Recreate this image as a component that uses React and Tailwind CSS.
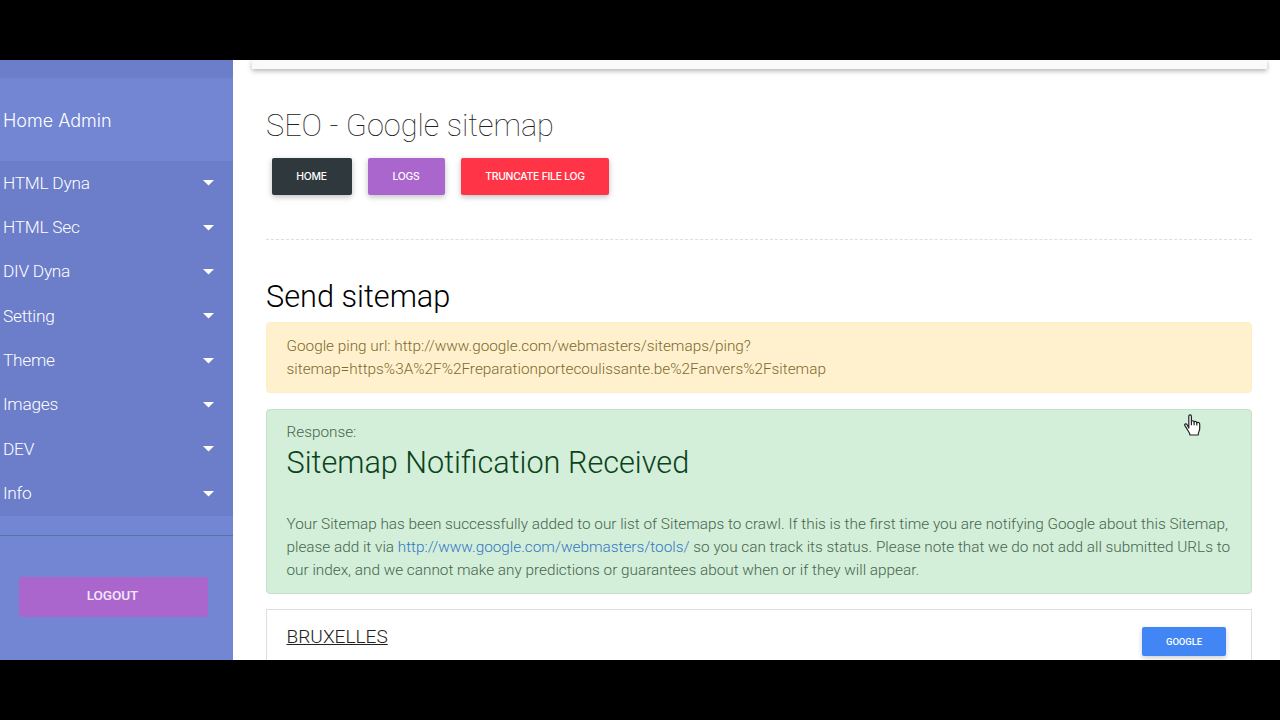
import React from 'react'

const menu = ['HTML Dyna', 'HTML Sec', 'DIV Dyna', 'Setting', 'Theme', 'Images', 'DEV', 'Info']

function Sidebar(){
  return (
    <aside className="flex w-[233px] shrink-0 flex-col bg-[#7286d3] text-white">
      <div className="h-[18px] shrink-0 bg-[#6c7dc9]" />
      <div className="flex h-[83px] shrink-0 items-center pl-[3px] pt-px font-['Inter'] text-[18px] font-light">Home Admin</div>
      <nav className="flex h-[355px] shrink-0 flex-col bg-[#6c7dc9]">
        {menu.map(name => (
          <a key={name} href="#" className="flex flex-1 items-center justify-between pl-[3px] pr-[19px] text-[17.3px] font-light">
            <span className="pt-[0.6px] tracking-[-0.25px]">{name}</span>
            <svg width="11" height="6" viewBox="0 0 11 6" fill="currentColor"><path d="M0 0h11L5.5 5.5z" /></svg>
          </a>
        ))}
      </nav>
      <div className="mt-[19px] h-px shrink-0 bg-[#4f7a9c]" />
      <button className="mx-[19px] mt-[41px] h-[40px] w-[189px] rounded-[3px] bg-[#aa66cc] pb-[3px] pr-[2px] text-[13.6px] font-medium tracking-[-0.1px] text-white/85">LOGOUT</button>
    </aside>
  )
}

function Button({className, children}){
  return (
    <button className={`h-[37px] rounded-[2px] font-['Inter'] text-[10.4px] font-medium tracking-[-0.25px] text-white shadow-[0_2px_5px_rgba(0,0,0,0.16),0_2px_8px_rgba(0,0,0,0.1)] ${className}`}>{children}</button>
  )
}

// hand pointer resting over the response panel
function Pointer(){
  return (
    <svg className="absolute left-[1184px] top-[414px]" width="17" height="22" viewBox="0 0 17 22" fill="white" stroke="#222" strokeWidth="1.2" strokeLinejoin="round">
      <path d="M4.8 14V2.2c0-1.8 2.6-1.8 2.6 0v5.3c.3-1.1 2.5-1 2.7.5.5-.9 2.5-.7 2.7.8 1-.9 2.9-.3 2.9 1.4v4.2c0 2.5-1.5 3.6-1.5 6.6H6c0-2.3-1.7-3.6-2.7-5.6L.9 11.6c-.7-1.3.8-2.3 1.9-1.3z" />
      <path d="M7.4 7.5v3.7M10.1 8v3.3M12.8 8.8v2.7" fill="none" />
    </svg>
  )
}

export default function App(){
  return (
    <div className="relative h-[720px] w-[1280px] overflow-hidden bg-black py-[60px] font-['Roboto',sans-serif] font-light">
      <div className="flex h-[600px] overflow-hidden bg-white">
        <Sidebar />
        <main className="flex min-w-0 flex-1 flex-col">
          <div className="ml-[19px] mr-[13px] h-[9px] shrink-0 bg-[#fafafb] shadow-[0_2px_5px_rgba(0,0,0,0.3)]" />
          <div className="flex flex-col pl-[33px] pr-[28px]">
            <h1 className="mt-[38px] h-[38px] whitespace-nowrap text-[30.7px] font-thin leading-[38px] text-[#222]">SEO - Google sitemap</h1>
            <div className="mt-[13px] flex gap-4 pl-[6px]">
              <Button className="w-[80px] bg-[#2e383d] pr-px">HOME</Button>
              <Button className="w-[77px] bg-[#aa66cc] pr-px">LOGS</Button>
              <Button className="w-[148px] bg-[#ff3547]">TRUNCATE FILE LOG</Button>
            </div>
            <div className="mt-[44px] border-t border-dashed border-[#dedede]" />
            <h2 className="mt-[38px] h-[38px] whitespace-nowrap text-[30.7px] leading-[38px] text-black">Send sitemap</h2>
            <div className="mt-[6px] h-[71px] rounded-[4px] border border-[#fdefc4] bg-[#fff1cd] pl-[19.5px] pt-[12px] text-[15.32px] leading-[23px] text-[#7d6a30]">
              Google ping url: http://www.google.com/webmasters/sitemaps/ping?<br />
              sitemap=https%3A%2F%2Freparationportecoulissante.be%2Fanvers%2Fsitemap
            </div>
            <div className="mt-[16px] h-[185px] whitespace-nowrap rounded-[4px] border border-[#c3e0cb] bg-[#d3eed9] pl-[19.5px] pt-[11px] text-[15.32px] leading-[23px] text-[#46664c]">
              <div>Response:</div>
              <h2 className="h-[38px] text-[30.65px] leading-[38px] text-[#0b4319]">Sitemap Notification Received</h2>
              <p className="mt-[31px]">
                Your Sitemap has been successfully added to our list of Sitemaps to crawl. If this is the first time you are notifying Google about this Sitemap,<br />
                please add it via <a href="#" className="text-[#3377c4]">http://www.google.com/webmasters/tools/</a> so you can track its status. Please note that we do not add all submitted URLs to<br />
                our index, and we cannot make any predictions or guarantees about when or if they will appear.
              </p>
            </div>
            <div className="mt-[15px] flex h-[90px] items-start justify-between border border-[#dcdfe2] pl-[19.5px] pr-[25px] pt-[14px]">
              <a href="#" className="pt-px text-[19.1px] leading-[24px] text-[#222] underline">BRUXELLES</a>
              <button className="mt-[3px] h-[29px] w-[84px] rounded-[2px] bg-[#4285f4] pt-px text-[9.5px] font-medium tracking-[-0.1px] text-white shadow-[0_2px_5px_rgba(0,0,0,0.2)]">GOOGLE</button>
            </div>
          </div>
        </main>
      </div>
      <Pointer />
    </div>
  )
}
